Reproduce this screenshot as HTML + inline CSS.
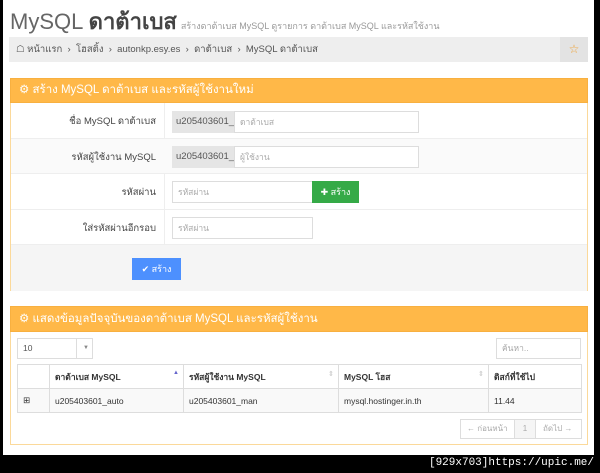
<!DOCTYPE html>
<html><head><meta charset="utf-8"><style>
*{box-sizing:border-box;margin:0;padding:0}
body{width:600px;height:473px;background:#000;font-family:"Liberation Sans","DejaVu Sans",sans-serif;font-size:9px;color:#333;position:relative;overflow:hidden}
.page{position:absolute;left:3px;top:0;width:591px;height:455px;background:#fff}
.abs{position:absolute}
.title{left:7px;top:4px;font-size:22px;color:#666;white-space:nowrap}
.title b{color:#444}
.title small{font-size:9px;color:#999;margin-left:4px}
.bc{left:6px;top:37px;width:579px;height:25px;background:#eee;font-size:9.5px;color:#555;line-height:25px;padding-left:7px}
.star{right:0;top:0;width:28px;height:25px;background:#e3e3e3;color:#f0a030;text-align:center;font-size:12px}
.ph{background:#ffb848;color:#fff;font-size:11.5px;line-height:23px;padding-left:8px;border:1px solid #f8b040}
.pb{border:1px solid #fbd99a;border-top:none}
.row{position:absolute;left:0;width:100%;border-bottom:1px solid #eee}
.lab{position:absolute;right:431px;font-size:9.5px;color:#444}
.inp{position:absolute;border:1px solid #ddd;background:#fff;color:#aaa;font-size:8.5px;padding-left:5px}
.add{position:absolute;background:#e5e5e5;color:#555;font-size:9.5px;padding-left:4px}
.btn{position:absolute;color:#fff;font-size:9px;text-align:center}
table{border-collapse:collapse;position:absolute;width:565px;font-size:8.5px}
td,th{border:1px solid #ddd;height:24px;padding-left:5px;text-align:left}
th{font-weight:bold;color:#333}
</style></head><body>
<div class="page">
<div class="abs title">MySQL <b>ดาต้าเบส</b><small>สร้างดาต้าเบส MySQL ดูรายการ ดาต้าเบส MySQL และรหัสใช้งาน</small></div>
<div class="abs bc">&#9750; หน้าแรก &nbsp;›&nbsp; โฮสติ้ง &nbsp;›&nbsp; autonkp.esy.es &nbsp;›&nbsp; ดาต้าเบส &nbsp;›&nbsp; MySQL ดาต้าเบส<div class="abs star">☆</div></div>

<div class="abs" style="left:7px;top:78px;width:578px;height:211px">
<div class="ph">⚙ สร้าง MySQL ดาต้าเบส และรหัสผู้ใช้งานใหม่</div>
<div class="pb" style="position:relative;height:188px">
<div class="abs" style="left:153px;top:0;width:1px;height:141px;background:#eee"></div>
<div class="row" style="top:0;height:36px"><span class="lab" style="top:11px">ชื่อ MySQL ดาต้าเบส</span><div class="add" style="left:161px;top:8px;width:62px;height:22px;line-height:22px">u205403601_</div><div class="inp" style="left:223px;top:8px;width:185px;height:22px;line-height:20px">ดาต้าเบส</div></div>
<div class="row" style="top:36px;height:35px;background:#fafafa"><span class="lab" style="top:11px">รหัสผู้ใช้งาน MySQL</span><div class="add" style="left:161px;top:7px;width:62px;height:22px;line-height:22px">u205403601_</div><div class="inp" style="left:223px;top:7px;width:185px;height:22px;line-height:20px">ผู้ใช้งาน</div></div>
<div class="row" style="top:71px;height:36px"><span class="lab" style="top:11px">รหัสผ่าน</span><div class="inp" style="left:161px;top:7px;width:141px;height:22px;line-height:20px">รหัสผ่าน</div><div class="btn" style="left:301px;top:7px;width:47px;height:22px;line-height:22px;background:#35aa47">✚ สร้าง</div></div>
<div class="row" style="top:107px;height:35px"><span class="lab" style="top:11px">ใส่รหัสผ่านอีกรอบ</span><div class="inp" style="left:161px;top:7px;width:141px;height:22px;line-height:20px">รหัสผ่าน</div></div>
<div class="abs" style="left:0;top:142px;width:100%;height:46px;background:#f5f5f5"><div class="btn" style="left:121px;top:13px;width:49px;height:22px;line-height:22px;background:#4d90fe">✔ สร้าง</div></div>
</div></div>

<div class="abs" style="left:7px;top:306px;width:578px;height:138px">
<div class="ph" style="line-height:24px">⚙ แสดงข้อมูลปัจจุบันของดาต้าเบส MySQL และรหัสผู้ใช้งาน</div>
<div class="pb" style="position:relative;height:113px">
<div class="inp" style="left:6px;top:6px;width:76px;height:21px;line-height:19px;color:#555">10<span style="position:absolute;left:58px;top:0;height:19px;border-left:1px solid #ddd;padding-left:6px;color:#888;font-size:6px">▼</span></div>
<div class="inp" style="left:485px;top:6px;width:85px;height:21px;line-height:19px">ค้นหา..</div>
<table style="left:6px;top:32px">
<tr><th style="width:32px"></th><th style="width:134px">ดาต้าเบส MySQL <span style="float:right;color:#66c;font-size:6px;margin-right:4px">▲</span></th><th style="width:155px">รหัสผู้ใช้งาน MySQL <span style="float:right;color:#ccc;font-size:7px;margin-right:4px">⇕</span></th><th style="width:150px">MySQL โฮส <span style="float:right;color:#ccc;font-size:7px;margin-right:4px">⇕</span></th><th>ดิสก์ที่ใช้ไป</th></tr>
<tr style="background:#f9f9f9"><td>⊞</td><td>u205403601_auto</td><td>u205403601_man</td><td>mysql.hostinger.in.th</td><td>11.44</td></tr>
</table>
<div class="abs" style="left:449px;top:87px;width:122px;height:20px;border:1px solid #ddd;font-size:8px;color:#aaa;line-height:18px"><span style="position:absolute;left:6px">← ก่อนหน้า</span><span style="position:absolute;left:53px;width:22px;height:18px;border-left:1px solid #ddd;border-right:1px solid #ddd;background:#f5f5f5;text-align:center">1</span><span style="position:absolute;left:82px">ถัดไป →</span></div>
</div></div>
</div>
<div class="abs" style="right:6px;top:457px;color:#fff;font-family:'Liberation Mono',monospace;font-size:11px">[929x703]https://upic.me/</div>
</body></html>
